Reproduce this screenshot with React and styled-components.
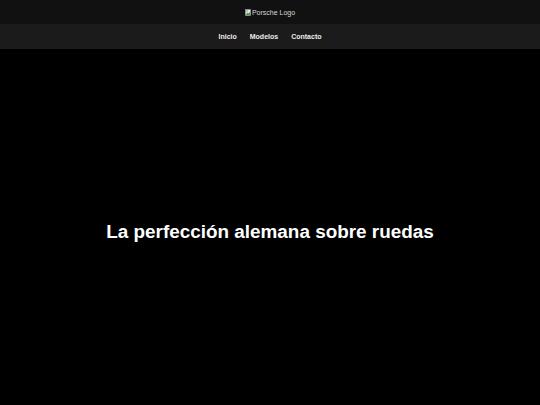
import React from "react";
import styled, { createGlobalStyle } from "styled-components";

const GlobalStyle = createGlobalStyle`
  html, body {
    margin: 0;
    padding: 0;
    background: #000;
    font-family: "Liberation Sans", Arial, sans-serif;
    overflow: hidden;
  }
`;

const Header = styled.header`
  display: flex;
  justify-content: center;
  align-items: center;
  height: 24px;
  background-color: #111111;
`;

const Logo = styled.div`
  display: flex;
  align-items: center;
  gap: 1px;
  font-size: 7px;
  color: #d8d8d8;
`;

const Nav = styled.nav`
  display: flex;
  justify-content: center;
  align-items: center;
  gap: 13px;
  height: 25px;
  background-color: #1b1b1b;
`;

const NavLink = styled.a`
  color: #ececec;
  font-size: 7px;
  font-weight: bold;
  text-decoration: none;
`;

const Hero = styled.section`
  display: flex;
  justify-content: center;
  align-items: center;
  height: 356px;
  padding-top: 9px;
  box-sizing: border-box;
  background-color: #000;
`;

const Title = styled.h1`
  margin: 0;
  color: #fff;
  font-size: 18.9px;
  font-weight: bold;
`;

function BrokenImage() {
  return (
    <svg width="6" height="7" viewBox="0 0 6 7">
      <rect x="0.5" y="0.5" width="5" height="6" fill="#e8e8e8" stroke="#9a9a9a" strokeWidth="0.6" />
      <path d="M1 5.5 L2.5 3.5 L3.5 4.5 L5 3 L5 6 L1 6 Z" fill="#4a9a4a" />
      <circle cx="2" cy="2" r="0.7" fill="#5a8ad0" />
    </svg>
  );
}

function App() {
  return (
    <>
      <GlobalStyle />
      <Header>
        <Logo>
          <BrokenImage />
          <span>Porsche Logo</span>
        </Logo>
      </Header>
      <Nav>
        <NavLink href="#">Inicio</NavLink>
        <NavLink href="#">Modelos</NavLink>
        <NavLink href="#">Contacto</NavLink>
      </Nav>
      <Hero>
        <Title>La perfección alemana sobre ruedas</Title>
      </Hero>
    </>
  );
}

export default App;
